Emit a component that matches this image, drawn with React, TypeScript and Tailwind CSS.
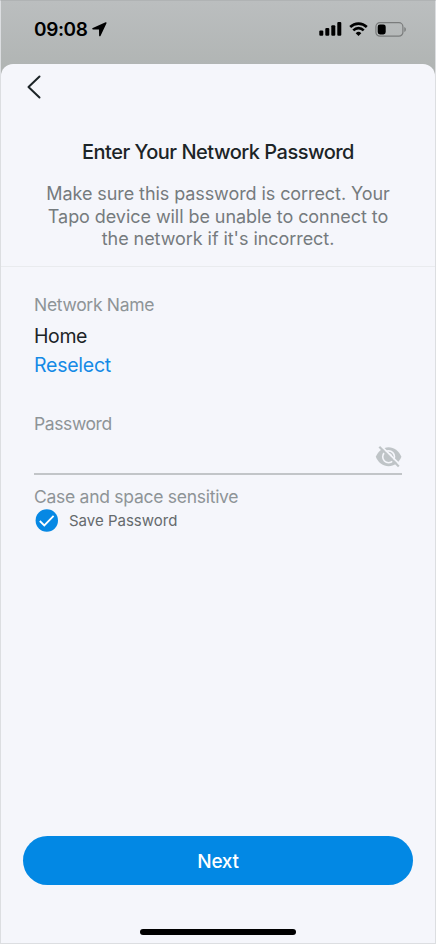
import { useState } from 'react';

const HINT_LINES = [
  { text: 'Make sure this password is correct. Your', className: 'tracking-[-0.08px]' },
  { text: 'Tapo device will be unable to connect to', className: 'tracking-[-0.06px]' },
  { text: "the network if it's incorrect.", className: 'tracking-[-0.06px]' },
];

function StatusBar() {
  return (
    <div className="h-[63px] shrink-0 flex items-start justify-between pl-[33px] pr-[28px] pt-[16px] text-black">
      <div className="flex items-center h-6">
        <span className="pt-[2px] text-[19px] leading-6 font-semibold tracking-[-0.4px]">09:08</span>
        <svg className="ml-[5px]" width="15" height="15" viewBox="0 0 15 15" fill="currentColor">
          <path d="M13.6.3.8 5.9c-.9.4-.7 1.5.3 1.500l5.600.1c.2 0 .3.1.3.3l.1 5.700c0 1 1.100 1.200 1.500.3L14.500 1.200c.3-.7-.2-1.200-.9-.9Z" />
        </svg>
      </div>
      <div className="flex items-center h-6">
        <svg width="23" height="14" viewBox="0 0 23 14" fill="currentColor">
          <rect x="0.3" y="8.5" width="4" height="5.3" rx="1.1" />
          <rect x="6.3" y="6" width="4" height="7.8" rx="1.1" />
          <rect x="12.3" y="3.2" width="4" height="10.6" rx="1.1" />
          <rect x="18.3" y="0" width="4" height="13.8" rx="1.1" />
        </svg>
        <svg className="ml-[7px]" width="19" height="14" viewBox="0 0 19 14" fill="none" stroke="currentColor" strokeWidth="2.6">
          <path d="M1.2 5a11.800 11.800 0 0 1 16.600 0" />
          <path d="M4.300 8.300a7.400 7.400 0 0 1 10.400 0" />
          <path d="M9.500 14 6.700 11.200a4 4 0 0 1 5.600 0Z" fill="currentColor" stroke="none" />
        </svg>
        <svg className="ml-[7px]" width="32" height="15" viewBox="0 0 32 15">
          <rect x="0.9" y="0.7" width="27" height="13.5" rx="4" fill="none" stroke="#7a7c7c" strokeWidth="1.2" />
          <rect x="2.7" y="2.5" width="8" height="9.9" rx="2.3" fill="#000" />
          <path d="M29.300 5v5c1-.4 1.600-1.400 1.600-2.500S30.300 5.400 29.300 5Z" fill="#7a7c7c" />
        </svg>
      </div>
    </div>
  );
}

function BackIcon() {
  return (
    <svg width="14" height="24" viewBox="0 0 14 24" fill="none" stroke="#1c2427" strokeWidth="2" strokeLinecap="round" strokeLinejoin="round">
      <path d="M12.500 1.500 1.500 12l11 10.500" />
    </svg>
  );
}

function HiddenEyeIcon() {
  return (
    <svg width="27" height="22" viewBox="0 0 27 22" fill="none">
      <path d="M.8 10.800C3.300 4.800 8.100 1.200 13.600 1.200s10.300 3.600 12.800 9.600c-2.500 6-7.300 9.500-12.800 9.500S3.300 16.800.8 10.800Z" fill="#bfc4c7" />
      <circle cx="13.600" cy="10.800" r="5.900" stroke="#f5f6fb" strokeWidth="1.600" />
      <path d="M13.600 8.100a2.700 2.700 0 0 1 2.700 2.700" stroke="#f5f6fb" strokeWidth="1.500" />
      <path d="M6.100 0 25.100 18.900" stroke="#f5f6fb" strokeWidth="2" />
      <path d="M4.300.8 23.800 20.500" stroke="#bfc4c7" strokeWidth="2.200" />
    </svg>
  );
}

export default function App() {
  const [password, setPassword] = useState('');
  const [savePassword, setSavePassword] = useState(true);

  return (
    <div className="w-[436px] h-[944px] flex flex-col overflow-hidden border border-[#dcdee1] border-t-[#b0b3b4] bg-[linear-gradient(#bbbebf,#b1b5b4_64px,#b1b5b4)] font-['Inter',sans-serif]">
      <StatusBar />

      <main className="flex-1 flex flex-col rounded-t-[12px] bg-[#f5f6fb]">
        <button className="mt-[11px] ml-[26px] w-[14px] h-6" aria-label="Back">
          <BackIcon />
        </button>

        {/* Heading */}
        <header className="h-[168px] shrink-0 pt-[41px] border-b border-[#e9ebee] text-center">
          <h1 className="text-[20px] leading-6 font-medium text-[#1c2427] tracking-[-0.5px] whitespace-nowrap">
            Enter Your Network Password
          </h1>
          <p className="mt-[19px] text-[18px] leading-[22.5px] text-[#757b7e] whitespace-nowrap">
            {HINT_LINES.map((line) => (
              <span key={line.text} className={`block ${line.className}`}>
                {line.text}
              </span>
            ))}
          </p>
        </header>

        {/* Network form */}
        <section className="px-[33px] pt-[26px]">
          <p className="text-[17.5px] leading-6 text-[#8e9497] tracking-[-0.3px]">Network Name</p>
          <p className="mt-[6px] text-[19.5px] leading-[26px] text-[#1c2427] tracking-[-0.4px]">Home</p>
          <button className="block mt-[3px] text-[19.5px] leading-[26px] text-[#148ae6] tracking-[-0.25px]">
            Reselect
          </button>

          <label htmlFor="password" className="block mt-[34px] text-[17.5px] leading-6 text-[#8e9497] tracking-[-0.4px]">
            Password
          </label>
          <div className="h-[39px] flex items-center border-b-2 border-[#c2c5c8] pt-[4px]">
            <input
              id="password"
              type="password"
              value={password}
              onChange={(e) => setPassword(e.target.value)}
              className="flex-1 min-w-0 bg-transparent outline-none text-[18px]"
            />
            <button aria-label="Show password">
              <HiddenEyeIcon />
            </button>
          </div>
          <p className="mt-[10px] text-[17.5px] leading-6 text-[#8e9497] tracking-[-0.27px]">Case and space sensitive</p>

          <button
            onClick={() => setSavePassword(!savePassword)}
            className="ml-px flex items-start gap-[11px] h-6"
          >
            <svg width="23" height="23" viewBox="0 0 23 23" fill="none">
              <circle cx="11.800" cy="11.500" r="11.200" fill={savePassword ? '#0688e4' : '#c2c5c8'} />
              <path d="m4.800 12 4.500 4.500 9.300-9.600" stroke="#fff" strokeWidth="1.800" />
            </svg>
            <span className="text-[15px] leading-6 text-[#656a6d]">Save Password</span>
          </button>
        </section>

        <button className="mt-auto mx-[22px] h-[49px] shrink-0 rounded-full bg-[#0288e4] text-white text-[19px] font-medium tracking-[-0.3px] pt-[3px]">
          Next
        </button>
        <div className="mt-[44px] mb-[8px] mx-auto w-[156px] h-[6px] shrink-0 rounded-full bg-black" />
      </main>
    </div>
  );
}
